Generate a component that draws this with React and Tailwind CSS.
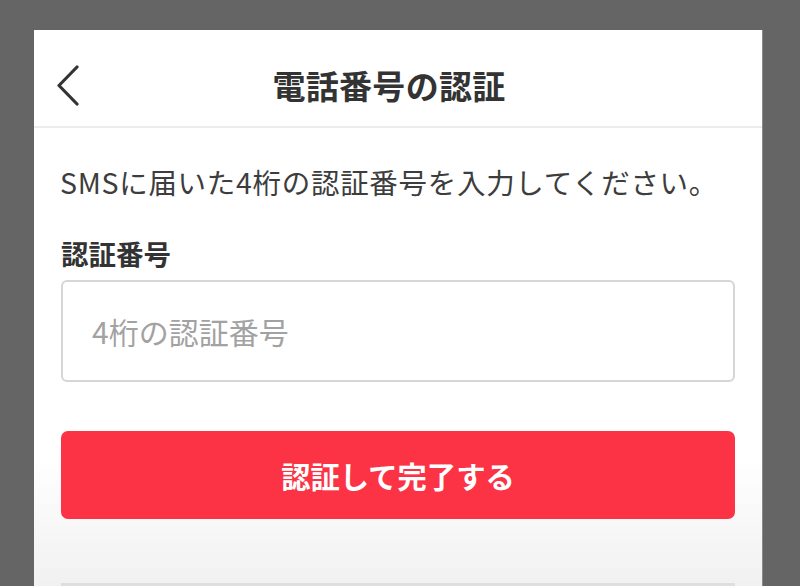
export default function App() {
  return (
    <div
      className="w-[800px] h-[586px] overflow-hidden bg-[#656565] pl-[34px] pt-[30px]"
      style={{ fontFamily: '"Noto Sans CJK JP", "Noto Sans", sans-serif' }}
    >
      <div className="w-[729px] h-[556px] bg-white flex flex-col border-r border-r-[#8a8a8a]">
        <div className="relative h-[98px] border-b-2 border-b-[#ececec] flex items-center justify-center pr-[18px] pt-[13px]">
          <svg
            className="absolute left-[22px] top-[35px]"
            width="24"
            height="42"
            viewBox="0 0 24 42"
            fill="none"
          >
            <path
              d="M21 2 L3 20.5 L21 39"
              stroke="#333333"
              strokeWidth="3.2"
              strokeLinecap="round"
              strokeLinejoin="round"
            />
          </svg>
          <h1 className="text-[33px] font-bold text-[#333333] leading-[40px] tracking-[0.3px]">
            電話番号の認証
          </h1>
        </div>
        <div className="flex-1 flex flex-col px-[27px] bg-gradient-to-b from-white from-[72%] to-[#f1f1f1]">
          <p className="mt-[34px] text-[28.5px] leading-[40px] tracking-[0.7px] text-[#3d3d3d] whitespace-nowrap -ml-[1px]">
            SMSに届いた4桁の認証番号を入力してください。
          </p>
          <div className="mt-[31px] text-[27.5px] leading-[40px] font-bold text-[#333333]">
            認証番号
          </div>
          <div className="mt-[7px] h-[102px] rounded-[6px] border-2 border-[#d6d6d6] bg-white flex items-center pl-[29px]">
            <span className="text-[30px] leading-[40px] text-[#a2a2a2]">4桁の認証番号</span>
          </div>
          <div className="mt-[49px] h-[88px] rounded-[7px] bg-[#fc3345] flex items-center justify-center">
            <span className="text-[29.3px] leading-[40px] font-bold text-white">認証して完了する</span>
          </div>
          <div className="mt-auto mb-0 h-[3px] bg-[#dedede]" />
        </div>
      </div>
    </div>
  );
}
